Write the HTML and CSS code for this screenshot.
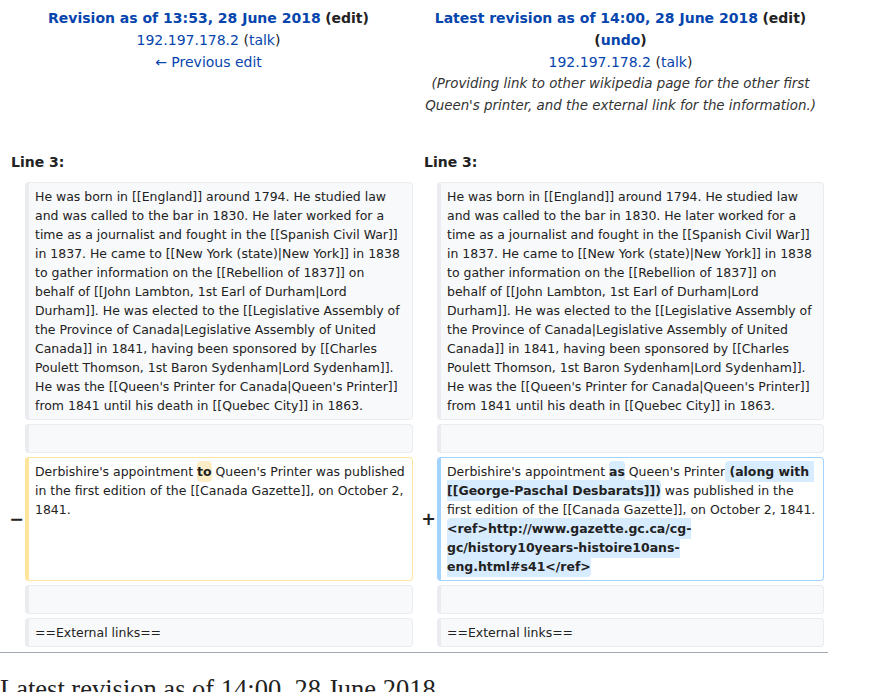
FILE: index.html
```html
<!DOCTYPE html>
<html lang="en">
<head>
<meta charset="utf-8">
<title>Diff</title>
<link rel="stylesheet" href="styles.css">
</head>
<body>
<div class="diff">
  <div class="title">
    <div><a class="strong" href="#">Revision as of 13:53, 28 June 2018</a> <span class="strong">(<span>edit</span>)</span></div>
    <div><a href="#">192.197.178.2</a> (<a href="#">talk</a>)</div>
    <div><a href="#">← Previous edit</a></div>
  </div>
  <div class="title">
    <div><a class="strong" href="#">Latest revision as of 14:00, 28 June 2018</a> <span class="strong">(<span>edit</span>)</span></div>
    <div><span class="strong">(<a href="#">undo</a>)</span></div>
    <div><a href="#">192.197.178.2</a> (<a href="#">talk</a>)</div>
    <div class="comment">(Providing link to other wikipedia page for the other first Queen's printer, and the external link for the information.)</div>
  </div>

  <div class="lineno">Line 3:</div>
  <div class="lineno">Line 3:</div>

  <div class="marker"></div>
  <div class="cell context">He was born in [[England]] around 1794. He studied law and was called to the bar in 1830. He later worked for a time as a journalist and fought in the [[Spanish Civil War]] in 1837. He came to [[New York (state)|New York]] in 1838 to gather information on the [[Rebellion of 1837]] on behalf of [[John Lambton, 1st Earl of Durham|Lord Durham]]. He was elected to the [[Legislative Assembly of the Province of Canada|Legislative Assembly of United Canada]] in 1841, having been sponsored by [[Charles Poulett Thomson, 1st Baron Sydenham|Lord Sydenham]]. He was the [[Queen's Printer for Canada|Queen's Printer]] from 1841 until his death in [[Quebec City]] in 1863.</div>
  <div class="marker"></div>
  <div class="cell context">He was born in [[England]] around 1794. He studied law and was called to the bar in 1830. He later worked for a time as a journalist and fought in the [[Spanish Civil War]] in 1837. He came to [[New York (state)|New York]] in 1838 to gather information on the [[Rebellion of 1837]] on behalf of [[John Lambton, 1st Earl of Durham|Lord Durham]]. He was elected to the [[Legislative Assembly of the Province of Canada|Legislative Assembly of United Canada]] in 1841, having been sponsored by [[Charles Poulett Thomson, 1st Baron Sydenham|Lord Sydenham]]. He was the [[Queen's Printer for Canada|Queen's Printer]] from 1841 until his death in [[Quebec City]] in 1863.</div>

  <div class="marker"></div>
  <div class="cell context"><br></div>
  <div class="marker"></div>
  <div class="cell context"><br></div>

  <div class="marker">−</div>
  <div class="cell deleted">Derbishire's appointment <del class="change">to</del> Queen's Printer was published in the first edition of the [[Canada Gazette]], on October 2, 1841.</div>
  <div class="marker">+</div>
  <div class="cell added">Derbishire's appointment <ins class="change">as</ins> Queen's Printer<ins class="change"> (along with [[George-Paschal Desbarats]])</ins> was published in the first edition of the [[Canada Gazette]], on October 2, 1841. <ins class="change">&lt;ref&gt;http://www.gazette.gc.ca/cg-gc/history10years-histoire10ans-eng.html#s41&lt;/ref&gt;</ins></div>

  <div class="marker"></div>
  <div class="cell context"><br></div>
  <div class="marker"></div>
  <div class="cell context"><br></div>

  <div class="marker"></div>
  <div class="cell context">==External links==</div>
  <div class="marker"></div>
  <div class="cell context">==External links==</div>
</div>
<hr class="rule">
<h2 class="heading">Latest revision as of 14:00, 28 June 2018</h2>
</body>
</html>
```
FILE: styles.css
```css
body {
  margin: 0;
  font-family: "DejaVu Sans", sans-serif;
  font-size: 14px;
  color: #222;
}

a {
  color: #0645ad;
  text-decoration: none;
}

.strong {
  font-weight: bold;
}

.diff {
  display: grid;
  grid-template-columns: 17px 388px 16px 387px;
  gap: 4px;
  padding: 4px;
  width: 828px;
  box-sizing: border-box;
}

.title {
  grid-column: span 2;
  text-align: center;
  line-height: 22px;
  padding-top: 3px;
}

.comment {
  font-style: italic;
  font-size: 13.4px;
  color: #333;
}

.lineno {
  grid-column: span 2;
  font-weight: bold;
  line-height: 22px;
  padding: 30px 7px 4.5px;
}

.marker {
  display: flex;
  align-items: center;
  justify-content: flex-end;
  margin-right: -3px;
  font-weight: bold;
  font-size: 17.5px;
}

.cell {
  font-size: 12.48px;
  line-height: 19px;
  padding: 4px 6px;
  border-style: solid;
  border-width: 1px 1px 1px 4px;
  border-radius: 4px;
  white-space: pre-wrap;
  overflow-wrap: break-word;
}

.context {
  background: #f8f9fa;
  border-color: #eaecf0;
  color: #222;
}

.deleted {
  border-color: #ffe49c;
}

.added {
  border-color: #a3d3ff;
}

.change {
  font-weight: bold;
  text-decoration: none;
  border-radius: 4px;
  padding: 3px 0;
}

.deleted .change {
  background: #feeec8;
}

.added .change {
  background: #d8ecff;
}

.rule {
  width: 828px;
  margin: 1px 0 0;
  border: 0;
  border-top: 1px solid #a2a9b1;
}

.heading {
  font-family: "Liberation Serif", serif;
  font-weight: normal;
  font-size: 26.5px;
  margin: 21px 0 0;
}
```
